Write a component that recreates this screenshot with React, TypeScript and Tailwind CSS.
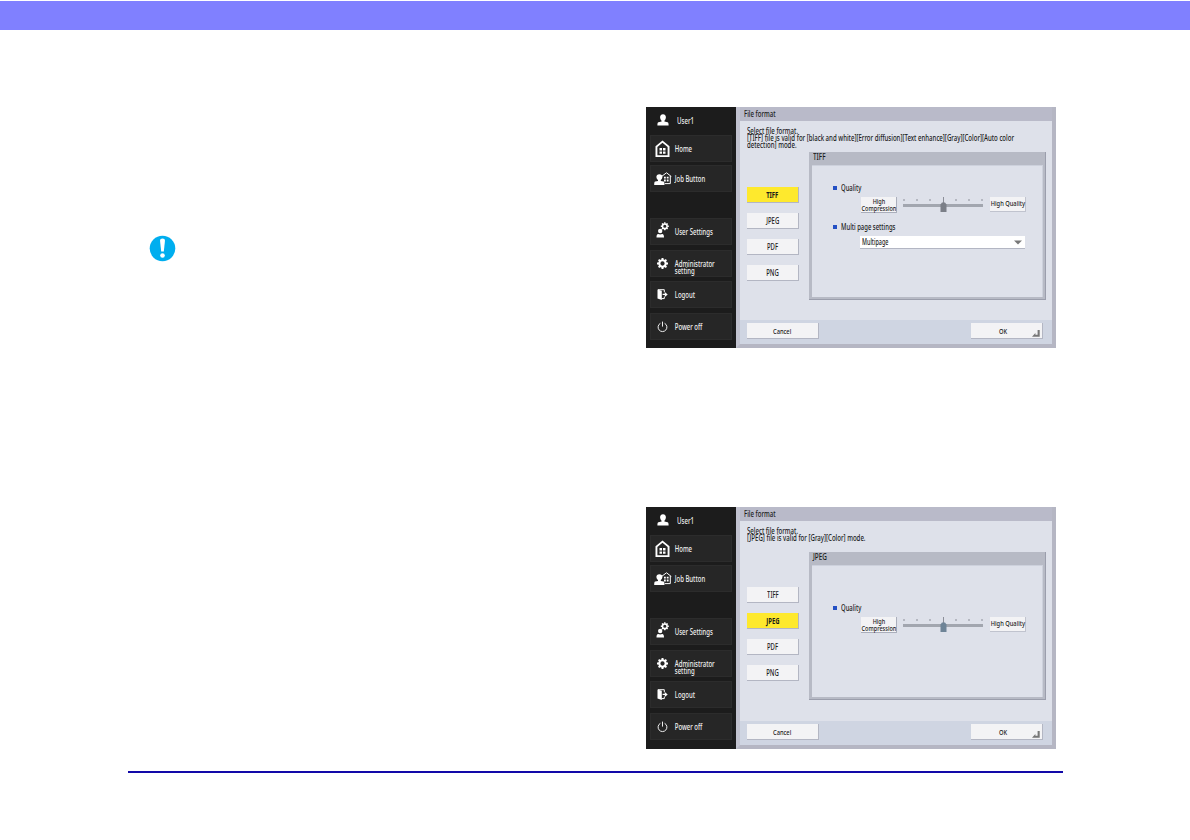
import React from 'react';

const UserIcon = () => (
  <svg width="12" height="12" viewBox="0 0 12 12" fill="#fff">
    <path d="M6 0.3C8 0.3 9 1.7 8.9 3.5C8.8 5 8 6.2 7.4 6.7V7.5L10.6 8.3C11.4 8.6 11.6 9.3 11.6 11.5H0.4C0.4 9.3 0.6 8.6 1.4 8.3L4.6 7.5V6.7C4 6.2 3.2 5 3.1 3.5C3 1.7 4 0.3 6 0.3Z" />
  </svg>
);

const HomeIcon = () => (
  <svg width="15" height="18" viewBox="0 0 15 18" fill="#fff">
    <path d="M7.5 0.5L14.5 6.2V17H0.5V6.2ZM7.5 2.8L2.4 7V15.2H12.6V7Z" fillRule="evenodd" />
    <path d="M4.5 8H7V10.4H4.5ZM8 8H10.5V10.4H8ZM4.5 11.4H7V13.8H4.5ZM8 11.4H10.5V13.8H8Z" />
  </svg>
);

const JobIcon = () => (
  <svg width="18" height="14" viewBox="0 0 18 14" fill="#fff">
    <path d="M7.5 4.5L12.5 0.8L17.3 4.5M10.8 11.6H16.3V4" fill="none" stroke="#fff" strokeWidth="1" />
    <path d="M10 4.8H11.8V6.6H10ZM12.8 4.8H14.6V6.6H12.8ZM10 7.6H11.8V9.4H10ZM12.8 7.6H14.6V9.4H12.8Z" />
    <path d="M5.4 2.2C7.4 2.2 8.5 3.4 8.4 5C8.3 6.6 7.4 7.6 6.8 8V8.9L9.5 9.6C10.3 9.9 10.5 10.7 10.5 13H0.2C0.2 10.7 0.4 9.9 1.2 9.6L4 8.9V8C3.4 7.6 2.5 6.6 2.4 5C2.3 3.4 3.4 2.2 5.4 2.2Z" />
  </svg>
);

const GearShape = () => (
  <>
    <circle cx="5" cy="5" r="2.9" fill="none" stroke="#fff" strokeWidth="1.9" />
    <path
      d="M5 0V1.8M5 8.2V10M0 5H1.8M8.2 5H10M1.5 1.5L2.8 2.8M7.2 7.2L8.5 8.5M1.5 8.5L2.8 7.2M7.2 2.8L8.5 1.5"
      stroke="#fff"
      strokeWidth="1.8"
    />
  </>
);

const GearIcon = () => (
  <svg className="-ml-px" width="11" height="11" viewBox="0 0 10 10">
    <GearShape />
  </svg>
);

const UserSettingsIcon = () => (
  <svg className="-mt-1" width="13" height="16" viewBox="0 0 13 16" fill="#fff">
    <g transform="translate(4.8 0.3) scale(0.8)">
      <GearShape />
    </g>
    <circle cx="4.2" cy="9" r="2.2" />
    <path d="M0.5 15.5C0.5 13 0.9 12.2 2.2 11.9L4.2 12.6L6.2 11.9C7.5 12.2 8 13 8 15.5Z" />
  </svg>
);

const LogoutIcon = () => (
  <svg width="11" height="11" viewBox="0 0 11 11" fill="#fff">
    <path d="M0.5 0.5L4.8 1.8V11L0.5 9.6Z" />
    <path d="M1 0.7H7.3V3.2M7.3 7.6V9.6H4.5" fill="none" stroke="#fff" />
    <path d="M5.6 4.7H7.8V2.9L10.7 5.4L7.8 7.9V6.1H5.6Z" />
  </svg>
);

const PowerIcon = () => (
  <svg width="11" height="12" viewBox="0 0 11 12" fill="none" stroke="#eee">
    <path d="M3.4 2.3A4.4 4.4 0 1 0 7.6 2.3M5.5 0.6V5.6" />
  </svg>
);

interface LabelProps {
  children: React.ReactNode;
  className?: string;
}

const Label: React.FC<LabelProps> = ({ children, className = 'origin-left scale-x-[0.76]' }) => (
  <span className={`inline-block whitespace-nowrap ${className}`}>{children}</span>
);

interface MenuItemProps {
  icon: React.ReactNode;
  children: React.ReactNode;
  className?: string;
}

const MenuItem: React.FC<MenuItemProps> = ({ icon, children, className = '' }) => (
  <div className={`flex h-[27px] w-[82px] shrink-0 items-center border border-[#2c2c2c] bg-[#262626] ${className}`}>
    <span className="flex w-[23px] shrink-0 justify-center">{icon}</span>
    <Label className="origin-left scale-x-[0.75] pl-px">{children}</Label>
  </div>
);

const Sidebar = () => (
  <div className="flex w-[90px] shrink-0 flex-col bg-[#1c1c1c] pl-1 text-[8px] leading-[7px] text-[#f0f0f0]">
    <div className="flex h-7 shrink-0 items-center pb-[2px] pl-[7px]">
      <UserIcon />
      <span className="w-2" />
      <Label>User1</Label>
    </div>
    <MenuItem icon={<HomeIcon />}>Home</MenuItem>
    <MenuItem icon={<JobIcon />} className="mt-[3px]">Job Button</MenuItem>
    <MenuItem icon={<UserSettingsIcon />} className="mt-[26px]">User Settings</MenuItem>
    <MenuItem icon={<GearIcon />} className="mt-[5px]">
      <span className="block pt-[7px]">Administrator<br />setting</span>
    </MenuItem>
    <MenuItem icon={<LogoutIcon />} className="mt-1">Logout</MenuItem>
    <MenuItem icon={<PowerIcon />} className="mt-[5px]">Power off</MenuItem>
  </div>
);

const Bullet: React.FC<LabelProps> = ({ children, className = '' }) => (
  <div className={`flex h-[10px] items-center pl-[21px] text-[8px] ${className}`}>
    <span className="mr-1 size-[4px] shrink-0 bg-[#2450c4]" />
    <Label className="origin-left scale-x-[0.74]">{children}</Label>
  </div>
);

const Slider: React.FC<{ thumb: string }> = ({ thumb }) => (
  <svg width="82" height="16" viewBox="0 0 82 16">
    <path d="M2 2V4M15 2V4M28 2V4M54 2V4M67 2V4M80 2V4" stroke="#8b8e98" />
    <path d="M41.5 0V7" stroke="#8b8e98" />
    <rect x="1" y="7" width="80" height="3" fill="#a2a6af" />
    <path d="M38.5 7.5L40 5.5H43L44.5 7.5V15H38.5Z" fill={thumb} />
  </svg>
);

const QualityRow: React.FC<{ thumb: string }> = ({ thumb }) => (
  <div className="flex h-4 items-start pl-[49px]">
    <div className="flex h-[16px] w-[36px] shrink-0 flex-col items-center justify-center border-r border-b border-[#aaaebb] bg-[#f3f3f5] pt-px text-[7px] leading-[7px]">
      <Label className="scale-x-[0.79]">High</Label>
      <Label className="scale-x-[0.79]">Compression</Label>
    </div>
    <div className="ml-[5px] flex shrink-0">
      <Slider thumb={thumb} />
    </div>
    <div className="ml-[6px] flex h-[15px] w-[36px] shrink-0 items-center justify-center border-r border-b border-[#c0c3ce] bg-[#f3f3f5] pt-px text-[7px]">
      <Label className="scale-x-[0.82]">High Quality</Label>
    </div>
  </div>
);

interface ScreenProps {
  format: string;
  message: React.ReactNode;
  height: string;
  children: React.ReactNode;
}

const FORMATS = ['TIFF', 'JPEG', 'PDF', 'PNG'];

const Screen: React.FC<ScreenProps> = ({ format, message, height, children }) => (
  <div className={`flex w-[410px] overflow-hidden text-[#1a1a1a] ${height}`}>
    <Sidebar />
    <div className="flex min-w-0 flex-1 flex-col border-r-4 border-b-4 border-l-4 border-r-[#b5b6c3] border-b-[#b5b6c3] border-l-[#c2c3d0] bg-[#dee1ea]">
      <div className="flex h-[14px] shrink-0 items-center bg-[#b9bac9] pl-1 text-[8px]">
        <Label>File format</Label>
      </div>
      <div className="flex h-[31px] shrink-0 flex-col items-start pt-[6px] pl-[7px] text-[8px] leading-[7px]">
        {message}
      </div>
      <div className="flex flex-1 pl-[7px]">
        <div className="flex flex-col gap-[10px] pt-[35px]">
          {FORMATS.map((name) => (
            <div
              key={name}
              className={`flex h-4 w-[52px] items-center justify-center border-r border-b border-[#b3b6c3] text-[8px] ${
                name === format ? 'bg-[#fee92d] font-bold' : 'bg-[#f3f3f5]'
              }`}
            >
              <Label className="scale-x-[0.74]">{name}</Label>
            </div>
          ))}
        </div>
        <div className="ml-[10px] flex h-[148px] w-[237px] flex-col border-r border-b border-[#9b9eac] bg-[#b7bac5] pr-[2px] pb-[2px] pl-[3px]">
          <div className="flex h-[13px] shrink-0 items-center pl-px text-[8px] leading-[8px]">
            <Label className="origin-left scale-x-[0.8] pb-[4px]">{format}</Label>
          </div>
          <div className="flex-1 border-t border-r border-[#cdd1dc] bg-[#dee1ea]">{children}</div>
        </div>
      </div>
      <div className="flex h-6 shrink-0 items-start justify-between bg-[#cfd5e2] pt-[3px] pr-[9px] pl-[7px] text-[7px]">
        <div className="flex h-4 w-[72px] items-center justify-center border-r border-b border-[#b3b6c3] bg-[#f3f3f5] pt-[3px]">
          <Label className="scale-x-[0.82]">Cancel</Label>
        </div>
        <div className="relative flex h-4 w-[72px] items-center justify-center border-r border-b border-[#b3b6c3] bg-[#f3f3f5] pt-[3px] pr-2">
          <Label className="scale-x-[0.82]">OK</Label>
          <svg className="absolute right-[2px] bottom-px" width="8" height="7" viewBox="0 0 8 7">
            <path d="M5.6 0H7.7V6.8H0L3.4 3V4.7H5.6Z" fill="#777" />
          </svg>
        </div>
      </div>
    </div>
  </div>
);

export default function App() {
  return (
    <div className="h-[840px] w-[1190px] overflow-hidden bg-white font-['Noto_Sans',sans-serif] font-medium">
      <div className="mt-px h-[29px] bg-[#8080ff]" />
      <div className="flex pt-[77px]">
        <div className="w-[646px] shrink-0 pt-[128px] pl-[149px]">
          <svg width="27" height="27" viewBox="0 0 27 27">
            <circle cx="13.5" cy="13.5" r="12.8" fill="#00aeef" />
            <path d="M11 5.5Q11 3.5 13.5 3.5T16 5.5L14.8 16.5H12.2Z" fill="#fff" />
            <circle cx="13.5" cy="20.5" r="2.3" fill="#fff" />
          </svg>
        </div>
        <div className="flex flex-col gap-[159px]">
          <Screen
            format="TIFF"
            height="h-[241px]"
            message={
              <>
                <Label>Select file format.</Label>
                <Label>[TIFF] file is valid for [black and white][Error diffusion][Text enhance][Gray][Color][Auto color</Label>
                <Label>detection] mode.</Label>
              </>
            }
          >
            <Bullet className="mt-[17px]">Quality</Bullet>
            <div className="pt-1">
              <QualityRow thumb="#7b7f88" />
            </div>
            <Bullet className="mt-[9px]">Multi page settings</Bullet>
            <div className="mt-1 ml-[48px] flex h-[13px] w-[165px] items-center justify-between border-b border-[#b3b6c3] bg-white pr-[3px] pl-[2px] text-[8px]">
              <Label className="origin-left scale-x-[0.68]">Multipage</Label>
              <svg width="8" height="5" viewBox="0 0 8 5">
                <path d="M0 0.5H8L4 4.5Z" fill="#777" />
              </svg>
            </div>
          </Screen>
          <Screen
            format="JPEG"
            height="h-[242px]"
            message={
              <>
                <Label>Select file format.</Label>
                <Label>[JPEG] file is valid for [Gray][Color] mode.</Label>
              </>
            }
          >
            <Bullet className="mt-[37px]">Quality</Bullet>
            <div className="pt-1">
              <QualityRow thumb="#6e8497" />
            </div>
          </Screen>
        </div>
      </div>
      <div className="mt-[22px] ml-[128px] h-[2px] w-[935px] bg-[#1209a8]" />
    </div>
  );
}
